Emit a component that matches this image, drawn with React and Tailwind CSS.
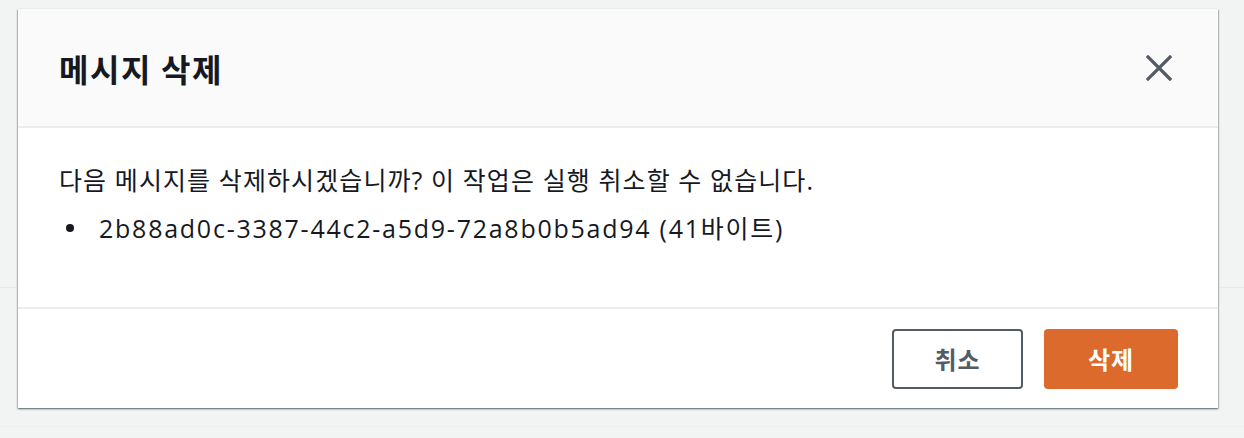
import React from "react";

const font = { fontFamily: '"Open Sans", "Noto Sans CJK KR", sans-serif' };
const hangul = { fontFamily: '"Noto Sans CJK KR", "Open Sans", sans-serif' };

function CloseIcon() {
  return (
    <svg width="26" height="26" viewBox="0 0 26 26" fill="none">
      <path
        d="M2 2 L24 24 M24 2 L2 24"
        stroke="#545b64"
        strokeWidth="3.2"
        strokeLinecap="square"
      />
    </svg>
  );
}

export default function App() {
  return (
    <div
      className="relative w-full h-[438px] bg-[#f2f3f3] overflow-hidden"
      style={font}
    >
      {/* page behind the modal */}
      <div className="h-[288px] border-b border-[#e9ebeb]" />
      <div className="h-[139px] border-b border-[#eceeee]" />

      {/* modal */}
      <div className="absolute left-[18px] top-[9px] w-[1200px] bg-white shadow-[0_1px_2px_0_rgba(0,28,36,0.45),1px_1px_1px_0_rgba(0,28,36,0.15),-1px_1px_1px_0_rgba(0,28,36,0.15)]">
        {/* header */}
        <div className="h-[119px] bg-[#fafafa] border-b-2 border-[#eaeded] pl-[41px] pr-[46px] flex items-center justify-between">
          <h2
            className="text-[32px] font-bold text-[#16191f] tracking-[1.6px]"
            style={hangul}
          >
            메시지 삭제
          </h2>
          <button className="flex items-center justify-center">
            <CloseIcon />
          </button>
        </div>

        {/* body */}
        <div className="h-[181px] pl-[41px] pt-[28px] text-[25px] text-[#16191f] leading-[48px] tracking-[1.1px] border-b-2 border-[#eaeded]">
          <p>다음 메시지를 삭제하시겠습니까? 이 작업은 실행 취소할 수 없습니다.</p>
          <div className="flex items-center">
            <span className="w-[8px] h-[8px] rounded-full bg-[#16191f] ml-[7px] mr-[25px]" />
            <span className="tracking-[1.75px]">
              2b88ad0c-3387-44c2-a5d9-72a8b0b5ad94 (41바이트)
            </span>
          </div>
        </div>

        {/* footer */}
        <div className="h-[99px] pr-[40px] flex items-center justify-end gap-[21px]">
          <button
            className="w-[131px] h-[60px] rounded-[4px] border-2 border-[#545b64] text-[#545b64] text-[24px] tracking-[1px] font-bold bg-white"
            style={hangul}
          >
            취소
          </button>
          <button
            className="w-[134px] h-[60px] rounded-[4px] bg-[#dc6a2c] text-white text-[24px] tracking-[1px] font-bold"
            style={hangul}
          >
            삭제
          </button>
        </div>
      </div>
    </div>
  );
}
